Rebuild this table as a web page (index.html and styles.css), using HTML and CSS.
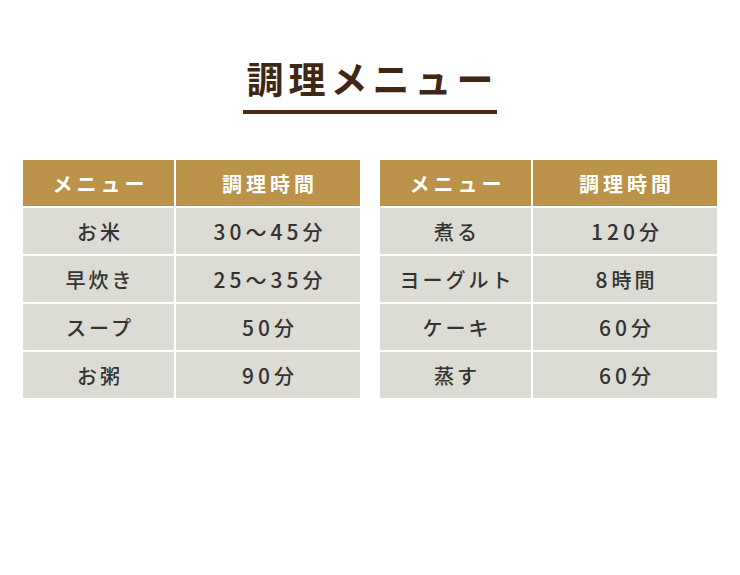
FILE: index.html
```html
<!DOCTYPE html>
<html lang="ja">
<head>
<meta charset="utf-8">
<link rel="stylesheet" href="styles.css">
</head>
<body>
<div class="page">
  <div class="heading">
    <h1 class="title">調理メニュー</h1>
    <div class="rule"></div>
  </div>
  <div class="tables">
    <div class="table">
      <div class="cell head">メニュー</div><div class="cell head">調理時間</div>
      <div class="cell">お米</div><div class="cell"><span class="num">30〜45</span>分</div>
      <div class="cell">早炊き</div><div class="cell"><span class="num">25〜35</span>分</div>
      <div class="cell">スープ</div><div class="cell"><span class="num">50</span>分</div>
      <div class="cell">お粥</div><div class="cell"><span class="num">90</span>分</div>
    </div>
    <div class="table">
      <div class="cell head">メニュー</div><div class="cell head">調理時間</div>
      <div class="cell">煮る</div><div class="cell"><span class="num">120</span>分</div>
      <div class="cell">ヨーグルト</div><div class="cell"><span class="num">8</span>時間</div>
      <div class="cell">ケーキ</div><div class="cell"><span class="num">60</span>分</div>
      <div class="cell">蒸す</div><div class="cell"><span class="num">60</span>分</div>
    </div>
  </div>
</div>
</body>
</html>
```
FILE: styles.css
```css
html, body {
  margin: 0;
  padding: 0;
  background: #ffffff;
}
body {
  width: 740px;
  height: 575px;
  font-family: "Noto Sans CJK JP", "Noto Sans", sans-serif;
}
.page {
  padding-top: 53px;
}
.heading {
  display: flex;
  flex-direction: column;
  align-items: center;
}
.title {
  margin: 0;
  font-size: 37px;
  line-height: 50px;
  font-weight: 700;
  color: #3f2716;
  letter-spacing: 5px;
  padding-left: 5px;
}
.rule {
  width: 254px;
  height: 4px;
  background: #4a2a16;
  margin-top: 7px;
}
.tables {
  display: flex;
  gap: 20px;
  padding-left: 23px;
  margin-top: 46px;
}
.table {
  display: grid;
  grid-template-columns: 151px 184px;
  grid-auto-rows: 46px;
  gap: 2px;
}
.cell {
  background: #dcdcd4;
  color: #333333;
  display: flex;
  align-items: center;
  justify-content: center;
  font-size: 20px;
  font-weight: 500;
  letter-spacing: 3px;
  padding-left: 3px;
}
.num {
  font-size: 21px;
  letter-spacing: 4px;
}
.cell.head {
  background: #ba9249;
  color: #ffffff;
  font-size: 20px;
  font-weight: 700;
  letter-spacing: 4px;
  padding-left: 4px;
}
```
